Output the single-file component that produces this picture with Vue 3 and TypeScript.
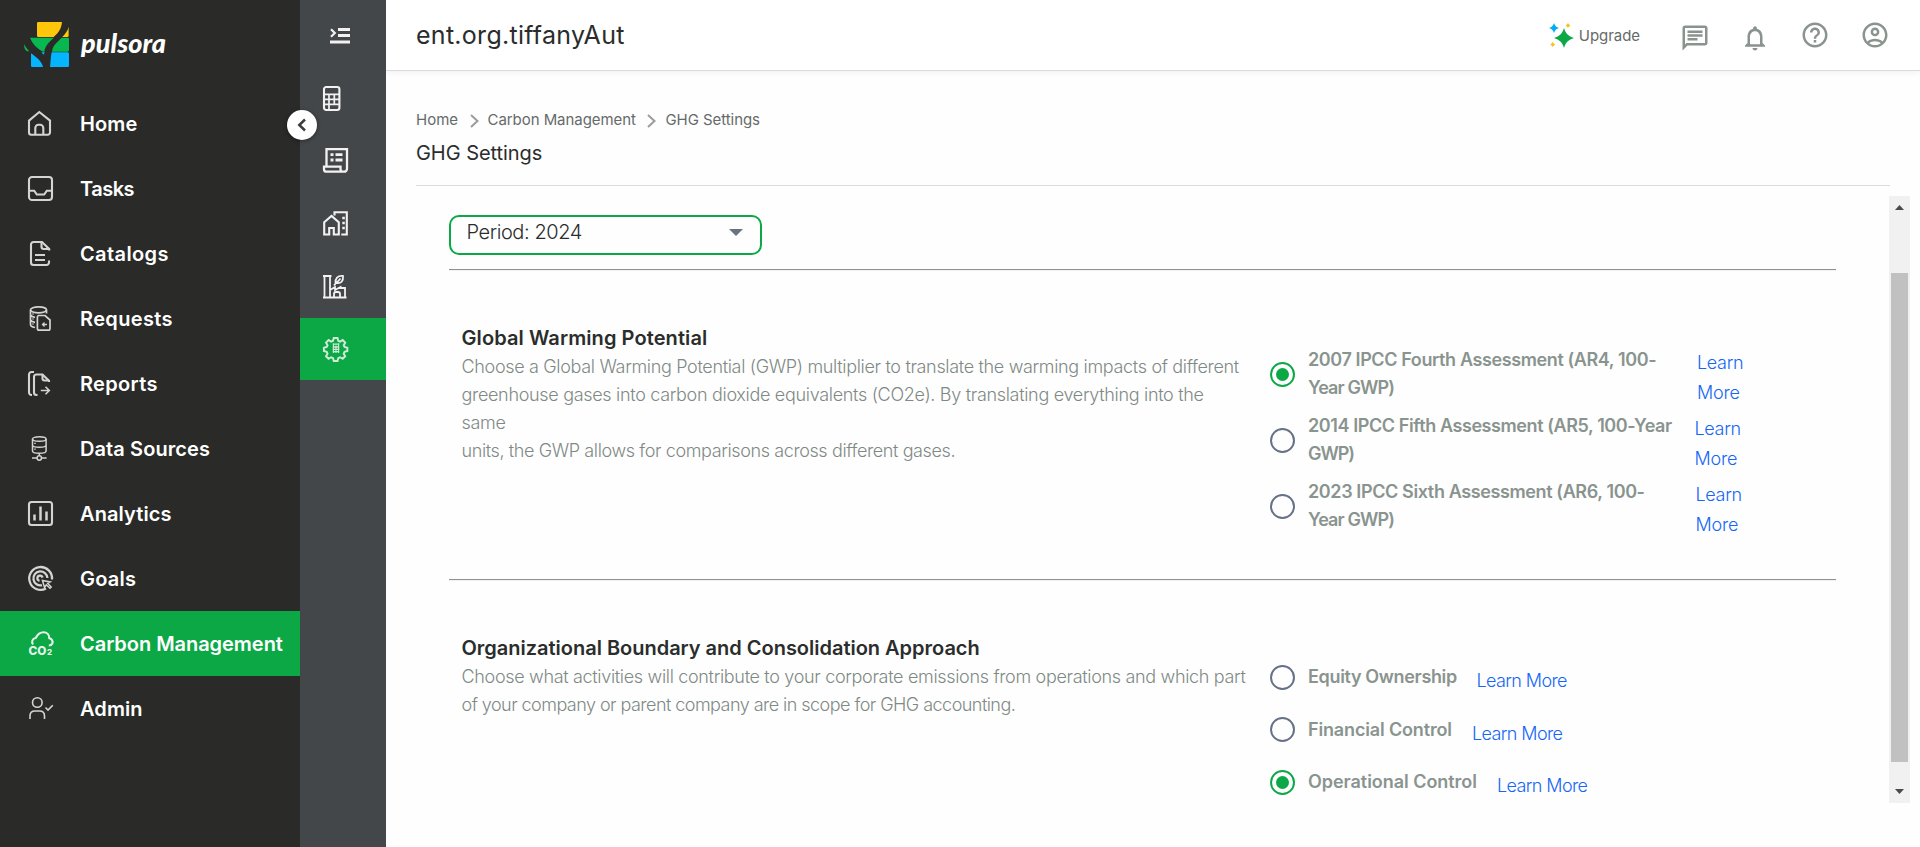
<script setup lang="ts">
import { ref } from 'vue'

interface NavItem { label: string; icon: string; spacing: number }
interface TextLine { text: string; spacing: number }
interface Choice { lines: TextLine[]; width: number; link: TextLine[] }
interface Section { title: string; titleSpacing: number; body: TextLine[]; rows: string; choices: Choice[] }

const icons: Record<string, string> = {
  home: '<path d="M1 9.6 11.3 1 22 9.6V21.5a2.2 2.2 0 0 1-2.2 2.2H3.2A2.2 2.2 0 0 1 1 21.5Z"/><path d="M7.3 23.5V17a3.2 3.2 0 0 1 3.2-3.2h1.6a3.2 3.2 0 0 1 3.2 3.2v6.5"/>',
  tasks: '<rect x="1" y="1" width="23" height="23" rx="3"/><path d="M1 14.7h5.2l2.6 3.8h7.4l2.6-3.8H24"/>',
  catalogs: '<path d="M21.2 9.5V8L14 1H5.5A2.5 2.5 0 0 0 3 3.5v18A2.5 2.5 0 0 0 5.5 24h13a2.5 2.5 0 0 0 2.5-2.5V19.5"/><path d="M13.5 1.5v4.3a2.2 2.2 0 0 0 2.2 2.2H21M7 14h10M7 19h10"/>',
  requests: '<g stroke-width="1.7"><ellipse cx="10.5" cy="3.8" rx="8" ry="3"/><path d="M2.5 4v14.5c0 1.5 2 2.6 4.5 3M18.5 4v3.500M2.500 9c1 1.500 2.800 2 4.500 2.300M2.500 14c1 1.500 2.500 2 4.500 2.300M5 7.500v1M5 12.500v1M5 17.500v1"/><path d="M10.500 9.500h6.500l5 4.500v8.500a1.700 1.700 0 0 1-1.700 1.700h-9.200a1.700 1.700 0 0 1-1.700-1.700V11.200a1.700 1.700 0 0 1 1.100-1.700Z"/><path d="M19 18.500h-4.500M16.500 16.500l-2 2 2 2" stroke-width="1.300"/></g>',
  reports: '<path d="M6 1H3.5A2.5 2.5 0 0 0 1 3.5v18A2.5 2.5 0 0 0 3.5 24H4M9.5 24H8.5A2.5 2.5 0 0 1 6 21.5V6a2.5 2.5 0 0 1 2.5-2.5H14.5l6.5 6.2V11"/><path d="M14.5 3.5V7.5a2 2 0 0 0 2 2H21" /><path d="M12.8 19.5h8M17.5 15.8l3.8 3.7-3.8 3.7" stroke-width="1.6"/>',
  sources: '<g stroke-width="1.5"><ellipse cx="11.3" cy="3" rx="6.8" ry="2.3"/><path d="M4.5 3v12c0 1.3 3 2.3 6.8 2.3s6.8-1 6.8-2.3V3M4.5 9c0 1.3 3 2.300 6.800 2.300s6.800-1 6.800-2.300M11.300 17.500V20M4 22h5M13.600 22h5"/><circle cx="11.300" cy="22" r="2.200"/><path d="M7 6.800v1.200M7 12.500v1.200"/></g>',
  analytics: '<rect x="1" y="1" width="23" height="23" rx="2.5"/><path d="M6.5 13.5v6M12.5 5.5v14M18.5 10.5v9" stroke-width="2.5"/>',
  goals: '<path d="M18 22.5A11.4 11.4 0 1 1 24 13.5M14 19.2A7 7 0 1 1 19.4 12M11.5 14.8a2.6 2.6 0 1 1 3-3.2" stroke-width="2.3"/><path d="M14.5 14.5l2 7 1.8-2.7 3.7 3.5 1.2-1.2-3.5-3.7 2.5-1.5z" stroke-width="1.5"/>',
  carbon: '<path d="M5 13.5c-1.8-2.5-.7-6 2.7-6.5C10 2.5 12.8 1.2 15.5 1.2c3.5 0 5.800 2.500 5.800 6 2.500.500 4 3 3 5.300-.6 1.300-2 2-3.500 2" stroke-width="2.100"/><text x="0.500" y="24" font-size="11.800" font-weight="800" font-family="Inter, sans-serif" fill="currentColor" stroke="none">CO</text><text x="19" y="24.400" font-size="8" font-weight="800" font-family="Inter, sans-serif" fill="currentColor" stroke="none">2</text>',
  admin: '<g stroke-width="1.6"><circle cx="9.3" cy="6.500" r="4.800"/><path d="M2 23v-3c0-3 2-5 5-5h4.500c3 0 5 2 5 5v3M17.500 11.500l2.500 2.500 4.800-4.800"/></g>',
  calculator: '<rect x="1" y="1" width="15.400" height="23" rx="2.200"/><path d="M1 8.300h15.500M1 13.300h15.500M1 18.300h15.500M6 8.300V24M11.300 8.300v10" stroke-width="1.700"/>',
  receipt: '<g stroke-width="2.300"><path d="M3.500 17.500V1.200H24v19.500a3 3 0 0 1-3 3H3.500a2.500 2.500 0 0 1-2.500-2.500v-2.500h16.500v2.500a2.500 2.500 0 0 0 2.500 2.500"/><path d="M7.500 6.700h3M12.500 6.700h7M7.500 12h3M12.500 12h7" stroke-width="2.800"/></g>',
  houses: '<path d="M1.2 11.200 8.500 5l7.300 6.200v12.300h-5v-6.500H6.200v6.500h-5Z"/><path d="M11.500 4.500V1.200h12.300v22.300h-5.500"/><path d="M19.300 7h2.500M19.300 12h2.500M19.300 17h2.500" stroke-width="2.500"/>',
  factory: '<g stroke-width="1.8"><path d="M0 2h8.500M1.500 2v21.500M7 2v21.500M0 23.500h23.500M7 16l5-3v3l5.500-3v1h4.500v9.500M11 23.500v-3.500a2 2 0 0 1 2-2h2a2 2 0 0 1 2 2v3.500"/><path d="M12.500 9.500c-.5-5 2-8 7.500-7.500.5 5-2 8-6.500 7l4-4.500M13.500 8.500l-2.500 3"/></g>',
  gear: '<path d="M10.500 1h4l.8 3 2 .9 2.800-1.600 2.700 2.700-1.600 2.800.9 2 3 .8v3.500l-3 .8-.9 2 1.600 2.800-2.700 2.700-2.800-1.600-2 .9-.8 3h-4l-.8-3-2-.9-2.800 1.600-2.700-2.700 1.600-2.800-.9-2-3-.8v-3.500l3-.8.9-2L2.200 6l2.700-2.700 2.800 1.600 2-.9Z" transform="translate(1 1) scale(.93)"/><path d="M9.800 8.200h6.400M9.800 11h6.400M9.800 13.300h6.400M9.800 15.600h6.400" stroke-width="1.300"/><path d="M10.400 7.500v9.500M13 9.500v7.500M15.600 7.500v9.500" stroke-width="1.100"/>',
}

const nav: NavItem[] = [
  { label: 'Home', icon: 'home', spacing: 0.13 },
  { label: 'Tasks', icon: 'tasks', spacing: -0.5 },
  { label: 'Catalogs', icon: 'catalogs', spacing: 0.38 },
  { label: 'Requests', icon: 'requests', spacing: 0.35 },
  { label: 'Reports', icon: 'reports', spacing: 0.33 },
  { label: 'Data Sources', icon: 'sources', spacing: 0.09 },
  { label: 'Analytics', icon: 'analytics', spacing: 0.1 },
  { label: 'Goals', icon: 'goals', spacing: 0.23 },
  { label: 'Carbon Management', icon: 'carbon', spacing: -0.04 },
  { label: 'Admin', icon: 'admin', spacing: 0.08 },
]
const activeNav = ref('Carbon Management')

const tools = ['calculator', 'receipt', 'houses', 'factory', 'gear']
const activeTool = ref('gear')

const sections: Section[] = [
  {
    title: 'Global Warming Potential',
    titleSpacing: 0.09,
    body: [
      { text: 'Choose a Global Warming Potential (GWP) multiplier to translate the warming impacts of different', spacing: -0.33 },
      { text: 'greenhouse gases into carbon dioxide equivalents (CO2e). By translating everything into the', spacing: -0.315 },
      { text: 'same', spacing: -0.29 },
      { text: 'units, the GWP allows for comparisons across different gases.', spacing: -0.385 },
    ],
    rows: 'tall',
    choices: [
      { lines: [{ text: '2007 IPCC Fourth Assessment (AR4, 100-', spacing: -0.393 }, { text: 'Year GWP)', spacing: -0.9 }], width: 389, link: [{ text: 'Learn', spacing: -0.33 }, { text: 'More', spacing: -0.2 }] },
      { lines: [{ text: '2014 IPCC Fifth Assessment (AR5, 100-Year', spacing: -0.41 }, { text: 'GWP)', spacing: -1.1 }], width: 386.5, link: [{ text: 'Learn', spacing: -0.33 }, { text: 'More', spacing: -0.2 }] },
      { lines: [{ text: '2023 IPCC Sixth Assessment (AR6, 100-', spacing: -0.386 }, { text: 'Year GWP)', spacing: -0.9 }], width: 387.5, link: [{ text: 'Learn', spacing: -0.33 }, { text: 'More', spacing: -0.2 }] },
    ],
  },
  {
    title: 'Organizational Boundary and Consolidation Approach',
    titleSpacing: -0.015,
    body: [
      { text: 'Choose what activities will contribute to your corporate emissions from operations and which part', spacing: -0.325 },
      { text: 'of your company or parent company are in scope for GHG accounting.', spacing: -0.54 },
    ],
    rows: 'short',
    choices: [
      { lines: [{ text: 'Equity Ownership', spacing: -0.34 }], width: 168.5, link: [{ text: 'Learn More', spacing: -0.61 }] },
      { lines: [{ text: 'Financial Control', spacing: -0.15 }], width: 164, link: [{ text: 'Learn More', spacing: -0.61 }] },
      { lines: [{ text: 'Operational Control', spacing: -0.04 }], width: 189, link: [{ text: 'Learn More', spacing: -0.61 }] },
    ],
  },
]
const selected = ref([0, 2])
const ls = (v: number) => ({ letterSpacing: v + 'px' })
</script>

<template>
  <div class="app">
    <aside class="sidebar">
      <div class="brand">
        <svg class="logo" viewBox="0 0 135 136">
          <path fill="#ffc709" d="M43 0H114C112 20 105 32 89 45H43a4 4 0 0 1-4-4V4a4 4 0 0 1 4-4ZM134 14V41a4 4 0 0 1-4 4H115C125 33 131 27 134 14Z" />
          <path fill="#07b74f" d="M18 47H90C75 60 63 72 61 89H57C40 80 27 68 18 47ZM113 47h18a4 4 0 0 1 4 4v34a4 4 0 0 1-4 4H84C86 70 98 62 113 47ZM0 67C5 76 10 82 16 88H9C3 85 0 78 0 67Z" />
          <path fill="#05b5ff" d="M21 94C39 107 53 118 57 135H25a4 4 0 0 1-4-4ZM83 91h48a4 4 0 0 1 4 4v36a4 4 0 0 1-4 4H78C80 119 80 104 83 91ZM52 91h10l-3 7Z" />
        </svg>
        <span class="wordmark">pulsora</span>
      </div>
      <nav class="nav">
        <a v-for="item in nav" :key="item.label" class="nav-item" :class="{ active: item.label === activeNav }" @click="activeNav = item.label">
          <svg class="glyph" viewBox="0 0 25 25" v-html="icons[item.icon]"></svg>
          <span :style="ls(item.spacing)">{{ item.label }}</span>
        </a>
      </nav>
    </aside>

    <aside class="rail">
      <button class="rail-menu" aria-label="Expand menu">
        <svg viewBox="0 0 20 16"><path d="M1 1.2 4.8 5 1 8.8" /><path d="M8 1.5h12M8 7.500h12M0 14h20" stroke-width="2.800" /></svg>
      </button>
      <a v-for="tool in tools" :key="tool" class="rail-item" :class="{ active: tool === activeTool }" @click="activeTool = tool">
        <svg class="glyph" viewBox="0 0 25 25" v-html="icons[tool]"></svg>
      </a>
      <button class="collapse" aria-label="Collapse">
        <svg viewBox="0 0 10 14"><path d="M8 1.500 2.300 7 8 12.500" /></svg>
      </button>
    </aside>

    <main class="main">
      <header class="topbar">
        <h1>ent.org.tiffanyAut</h1>
        <div class="actions">
          <span class="upgrade">
            <svg viewBox="0 0 25 25">
              <path fill="#0ca846" d="M15 5c1.700 5.500 4.500 8.300 10 10-5.500 1.700-8.300 4.500-10 10-1.700-5.500-4.500-8.300-10-10 5.500-1.700 8.300-4.500 10-10Z" />
              <path fill="#00adf5" d="M5 0c.9 2.800 2.200 4.100 5 5-2.800.9-4.100 2.200-5 5-.9-2.800-2.200-4.100-5-5 2.800-.9 4.100-2.200 5-5Z" />
              <path fill="#f5c21b" d="M19 0l1.100 1.400L21.500 2.500l-1.400 1.100L19 5l-1.100-1.400-1.400-1.100 1.400-1.100ZM3.700 19l1.100 1.400 1.400 1.100-1.400 1.100L3.700 24l-1.100-1.400-1.400-1.100 1.400-1.100Z" />
            </svg>
            Upgrade
          </span>
          <svg class="action low" viewBox="0 0 24 24"><path d="M4 4h16v12H5.170L4 17.170V4m0-2c-1.100 0-1.990.9-1.990 2L2 22l4-4h14c1.100 0 2-.9 2-2V4c0-1.100-.9-2-2-2H4zm2 10h8v2H6v-2zm0-3h12v2H6V9zm0-3h12v2H6V6z" /></svg>
          <svg class="action low" viewBox="0 0 24 24"><path d="M12 22c1.100 0 2-.9 2-2h-4c0 1.100.9 2 2 2zm6-6v-5c0-3.070-1.630-5.640-4.500-6.320V4c0-.83-.67-1.500-1.500-1.500s-1.500.67-1.500 1.500v.68C7.640 5.360 6 7.920 6 11v5l-2 2v1h16v-1l-2-2zm-2 1H8v-6c0-2.480 1.510-4.500 4-4.500s4 2.020 4 4.500v6z" /></svg>
          <svg class="action" viewBox="0 0 24 24"><path d="M11 18h2v-2h-2v2zm1-16C6.480 2 2 6.480 2 12s4.480 10 10 10 10-4.480 10-10S17.520 2 12 2zm0 18c-4.410 0-8-3.590-8-8s3.590-8 8-8 8 3.590 8 8-3.590 8-8 8zm0-14c-2.210 0-4 1.790-4 4h2c0-1.100.9-2 2-2s2 .9 2 2c0 2-3 1.750-3 5h2c0-2.250 3-2.500 3-5 0-2.210-1.790-4-4-4z" /></svg>
          <svg class="action" viewBox="0 0 24 24"><path fill-rule="evenodd" d="M12 2C6.480 2 2 6.480 2 12s4.480 10 10 10 10-4.480 10-10S17.520 2 12 2zM7.350 18.500C8.660 17.560 10.260 17 12 17s3.340.56 4.650 1.500C15.340 19.440 13.740 20 12 20s-3.340-.56-4.650-1.500zm10.790-1.380C16.450 15.800 14.320 15 12 15s-4.450.8-6.140 2.120C4.700 15.730 4 13.950 4 12c0-4.420 3.580-8 8-8s8 3.580 8 8c0 1.950-.7 3.730-1.860 5.120zM12 6c-1.930 0-3.500 1.570-3.500 3.500S10.070 13 12 13s3.500-1.570 3.500-3.500S13.930 6 12 6zm0 5c-.83 0-1.500-.67-1.500-1.500S11.170 8 12 8s1.500.67 1.500 1.500S12.830 11 12 11z" /></svg>
        </div>
      </header>

      <div class="page-head">
        <div class="crumbs">
          <span class="c-home">Home</span>
          <svg viewBox="0 0 9 14"><path d="M1 1l6.500 6L1 13" /></svg>
          <span class="c-mid">Carbon Management</span>
          <svg viewBox="0 0 9 14"><path d="M1 1l6.500 6L1 13" /></svg>
          <span class="c-last">GHG Settings</span>
        </div>
        <h2>GHG Settings</h2>
      </div>

      <div class="scroller">
        <div class="content">
          <div class="select">
            <span>Period: 2024</span>
            <svg viewBox="0 0 14 7"><path d="M0 0h14L7 7Z" /></svg>
          </div>
          <template v-for="(section, s) in sections" :key="section.title">
            <div class="rule"></div>
            <section class="section">
              <div class="info">
                <h3 :style="ls(section.titleSpacing)">{{ section.title }}</h3>
                <p><span v-for="line in section.body" :key="line.text" :style="ls(line.spacing)">{{ line.text }}</span></p>
              </div>
              <div class="choices">
                <div v-for="(choice, c) in section.choices" :key="c" class="choice" :class="section.rows">
                  <span class="radio" :class="{ on: selected[s] === c }" @click="selected[s] = c"></span>
                  <span class="label" :style="{ width: choice.width + 'px' }">
                    <span v-for="line in choice.lines" :key="line.text" :style="ls(line.spacing)">{{ line.text }}</span>
                  </span>
                  <a class="link"><span v-for="line in choice.link" :key="line.text" :style="ls(line.spacing)">{{ line.text }}</span></a>
                </div>
              </div>
            </section>
          </template>
        </div>
        <div class="scrollbar">
          <svg class="arrow" viewBox="0 0 9 5"><path d="M0 5 4.500 0 9 5Z" /></svg>
          <div class="thumb"></div>
          <svg class="arrow" viewBox="0 0 9 5"><path d="M0 0h9L4.500 5Z" /></svg>
        </div>
      </div>
    </main>
  </div>
</template>

<style>
body { margin: 0; overflow: hidden; }
</style>

<style scoped>
.app { display: flex; width: 1920px; height: 847px; overflow: hidden; background: #fefefe; font-family: Inter, "Noto Sans", sans-serif; color: #2a2d2c; }
.app * { box-sizing: border-box; }
h1, h2, h3, p { margin: 0; font-weight: 400; }
button { border: 0; padding: 0; background: none; }
span { white-space: nowrap; }

.sidebar { width: 300px; flex: none; background: #2a2a28; color: #fff; }
.brand { display: flex; align-items: flex-start; height: 91px; padding: 22px 0 0 24px; }
.logo { width: 45px; height: 45.3px; flex: none; }
.wordmark { margin: 4px 0 0 12px; font: italic 900 27px/34px Lato, sans-serif; letter-spacing: .05px; }
.nav-item { display: flex; align-items: center; height: 65px; padding-left: 28px; font-size: 20px; font-weight: 600; }
.nav-item span { margin-left: 27px; }
.nav-item.active, .rail-item.active { background: #0ca846; }
.glyph { width: 25px; height: 25px; flex: none; overflow: visible; fill: none; stroke: currentColor; stroke-width: 2.1; color: #d4d4d3; }
.active .glyph { color: #e6f5eb; }

.rail { position: relative; width: 86px; flex: none; background: #44474a; }
.rail-menu { display: block; height: 67px; padding: 4px 0 0 30px; }
.rail-menu svg { display: block; width: 20px; height: 16px; fill: none; stroke: #f1f1f1; stroke-width: 2.2; }
.rail-item { display: flex; align-items: center; height: 62.65px; padding-left: 23px; }
.rail-item .glyph { color: #f2f2f2; }
.rail-item.active .glyph { color: #cdebd7; }
.collapse { position: absolute; left: -13px; top: 109.5px; display: flex; align-items: center; justify-content: center; width: 30px; height: 30px; border-radius: 50%; background: #fff; box-shadow: 0 1px 4px rgba(0, 0, 0, .4); }
.collapse svg { width: 10px; height: 14px; fill: none; stroke: #3b3d3e; stroke-width: 2.5; }

.main { flex: 1; min-width: 0; }
.topbar { display: flex; align-items: flex-start; justify-content: space-between; height: 71px; padding: 0 30px; border-bottom: 1px solid #d9dbe0; box-shadow: 0 2px 5px rgba(60, 60, 90, .06); background: #fff; }
h1 { font-size: 25px; line-height: 36px; padding-top: 17px; letter-spacing: .28px; }
.actions { display: flex; padding-top: 20px; }
.upgrade { display: flex; align-items: center; gap: 5px; height: 31px; margin-right: 40px; font-size: 15px; letter-spacing: -.05px; color: #666a69; }
.upgrade svg { width: 25px; height: 25px; margin-top: -1px; }
.action { width: 30px; height: 30px; fill: #8a948f; }
.action + .action { margin-left: 30px; }
.action.low { margin-top: 2.5px; }

.page-head { margin: 0 30px; padding: 36px 0 17px; border-bottom: 1px solid #dcdcdc; }
.crumbs { display: flex; align-items: center; height: 24px; font-size: 15px; color: #666a69; }
.crumbs svg { width: 9px; height: 14px; margin: 4px 9px 0 11.5px; fill: none; stroke: #999d9b; stroke-width: 2; }
.c-mid { letter-spacing: -.06px; }
.c-last { letter-spacing: -.05px; }
h2 { margin-top: 7px; font-size: 20px; line-height: 30px; letter-spacing: -.05px; }

.scroller { display: flex; justify-content: space-between; height: 607px; margin: 10px 10px 0 63px; overflow: hidden; }
.content { width: 1387px; padding-top: 19px; }
.select { display: flex; justify-content: space-between; width: 313px; height: 40px; margin-bottom: 14px; padding: 0 17px 0 15.5px; border: 2px solid #0ca846; border-radius: 10px; font-size: 20px; font-weight: 300; line-height: 30px; }
.select span { letter-spacing: -.42px; }
.select svg { width: 14px; height: 7px; margin-top: 12px; fill: #68737f; }
.rule { height: 2px; border-top: 1px solid #909090; border-bottom: 1px solid #f2f2f2; }
.section { display: flex; height: 308px; padding-left: 12.5px; }
.info { width: 808px; padding-top: 53px; }
h3 { font-size: 20px; font-weight: 600; line-height: 28px; }
p { padding-top: 1px; font-size: 18px; font-weight: 300; line-height: 28px; color: #7f8a85; }
p span, .label span, .link span { display: block; }
.choices { padding-top: 70px; }
.choice { display: flex; align-items: center; }
.choice.tall { height: 66px; }
.choice.short { height: 52.5px; }
.radio { display: flex; align-items: center; justify-content: center; width: 25px; height: 25px; margin-right: 13.5px; border: 2.5px solid #667189; border-radius: 50%; }
.radio.on { border-color: #0ca846; }
.radio.on::after { content: ""; width: 13px; height: 13px; border-radius: 50%; background: #0ca846; }
.label { font-size: 18px; font-weight: 600; line-height: 28px; color: #8a948f; }
.link { padding-top: 8px; font-size: 18px; font-weight: 300; line-height: 30px; color: #1667f5; }

.scrollbar { display: flex; flex-direction: column; align-items: center; width: 21px; height: 607px; padding: 9px 0; background: #f1f1f1; }
.arrow { width: 9px; height: 5px; fill: #4a4a4a; }
.thumb { width: 17px; height: 489px; margin: 63px 0 27px; background: #c1c1c1; }
</style>
